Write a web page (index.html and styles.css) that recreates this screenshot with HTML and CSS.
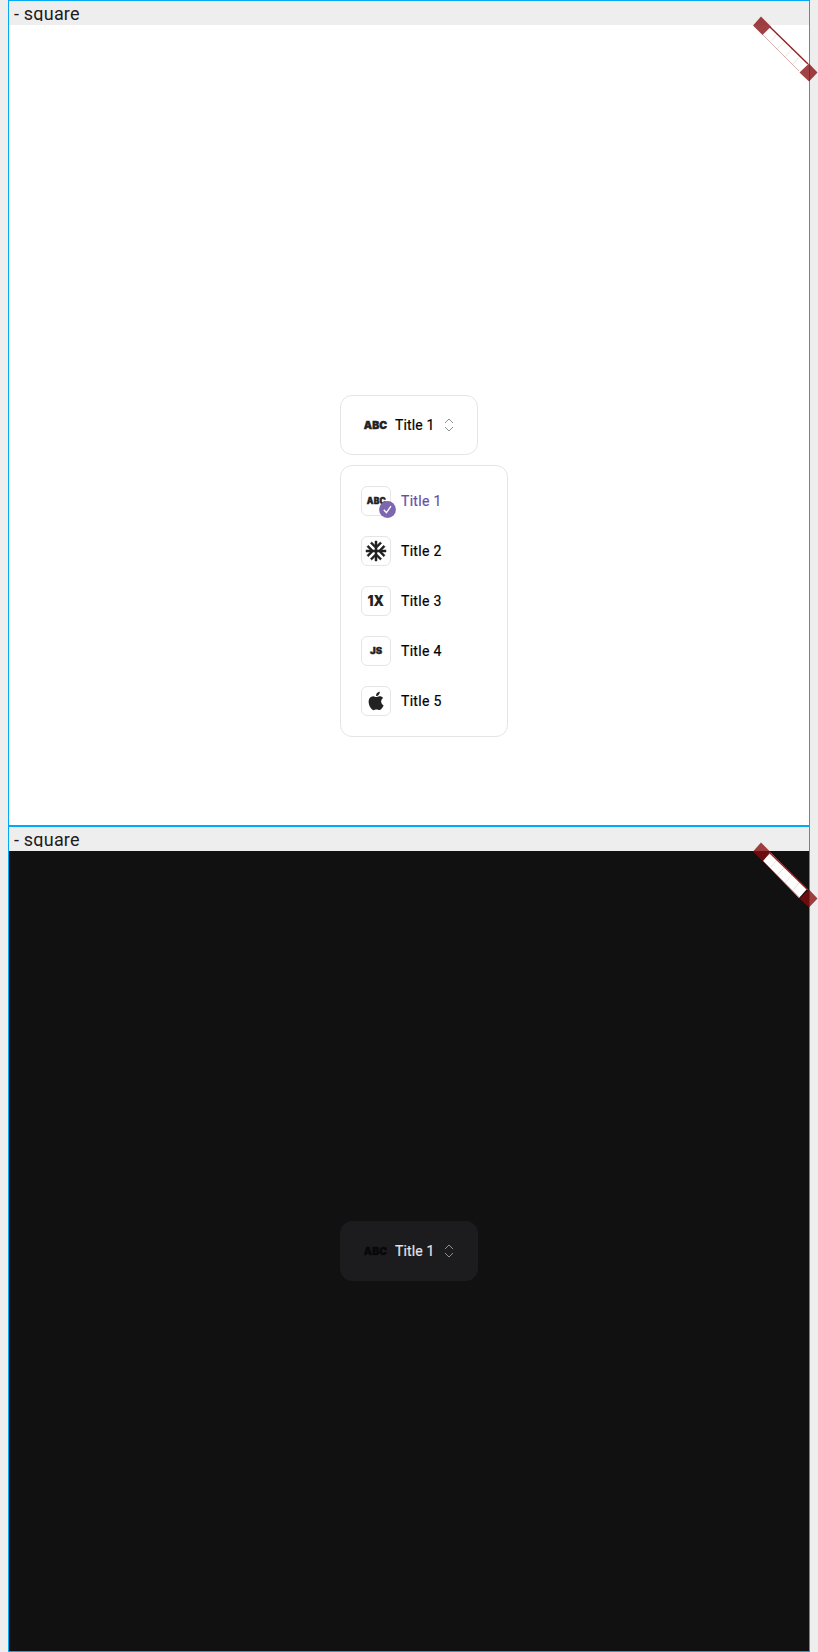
FILE: index.html
```html
<!DOCTYPE html>
<html lang="en">
<head>
<meta charset="utf-8">
<title>square</title>
<link rel="stylesheet" href="styles.css">
</head>
<body>
<main class="gallery">
  <section class="frame light">
    <header class="caption"><span>- square</span></header>
    <div class="stage">
      <div class="dropdown">
        <button class="trigger">
          <svg class="brand" width="24" height="20" viewBox="0 0 24 20"><text class="logo abc" x="0.8" y="14" textLength="23.4" lengthAdjust="spacing">ABC</text></svg>
          <span class="label">Title 1</span>
          <svg class="chevrons" width="10" height="14" viewBox="0 0 10 14"><path d="M1 5 5 1l4 4M1 9l4 4 4-4"/></svg>
        </button>
        <ul class="menu">
          <li class="item selected">
            <span class="tile">
              <svg width="28" height="28" viewBox="0 0 28 28"><text class="logo abc small" x="4.8" y="17" textLength="19" lengthAdjust="spacing">ABC</text></svg>
              <svg class="check" width="17" height="17" viewBox="0 0 17 17"><circle cx="8.5" cy="8.5" r="8.4"/><path d="m4.8 8.8 2.6 2.9 4.6-6.5"/></svg>
            </span>
            <span class="label">Title 1</span>
          </li>
          <li class="item">
            <span class="tile"><svg width="28" height="28" viewBox="0 0 28 28"><path class="snow" transform="translate(2 2)" d="M22 11h-4.17l3.24-3.24-1.41-1.42L15 11h-2V9l4.66-4.66-1.42-1.41L13 6.17V2h-2v4.17L7.76 2.93 6.34 4.34 11 9v2H9L4.34 6.34 2.93 7.76 6.17 11H2v2h4.17l-3.24 3.24 1.41 1.42L9 13h2v2l-4.66 4.66 1.42 1.41L11 17.83V22h2v-4.17l3.24 3.24 1.42-1.41L13 15v-2h2l4.66 4.66 1.41-1.42L17.83 13H22z"/></svg></span>
            <span class="label">Title 2</span>
          </li>
          <li class="item">
            <span class="tile"><svg width="28" height="28" viewBox="0 0 28 28"><text class="logo onex" x="5.6" y="19" textLength="16.4" lengthAdjust="spacingAndGlyphs">1X</text></svg></span>
            <span class="label">Title 3</span>
          </li>
          <li class="item">
            <span class="tile"><svg width="28" height="28" viewBox="0 0 28 28"><text class="logo js" x="8" y="17" textLength="12" lengthAdjust="spacingAndGlyphs">JS</text></svg></span>
            <span class="label">Title 4</span>
          </li>
          <li class="item">
            <span class="tile"><svg width="28" height="28" viewBox="0 0 28 28"><path class="apple" transform="translate(3.1 2.9) scale(.92)" d="M18.71 19.5C17.88 20.74 17 21.95 15.66 21.97 14.32 22 13.89 21.18 12.37 21.18 10.84 21.18 10.37 21.95 9.1 22 7.79 22.05 6.8 20.68 5.96 19.47 4.25 17 2.94 12.45 4.7 9.39 5.57 7.87 7.13 6.91 8.82 6.88 10.1 6.86 11.32 7.75 12.11 7.75 12.89 7.75 14.37 6.68 15.92 6.84 16.57 6.87 18.39 7.1 19.56 8.82 19.47 8.88 17.39 10.1 17.41 12.63 17.44 15.65 20.06 16.66 20.09 16.67 20.06 16.74 19.67 18.11 18.71 19.5ZM13 3.5C13.73 2.67 14.94 2.04 15.94 2 16.07 3.17 15.6 4.35 14.9 5.19 14.21 6.04 13.07 6.7 11.95 6.61 11.8 5.46 12.36 4.26 13 3.5Z"/></svg></span>
            <span class="label">Title 5</span>
          </li>
        </ul>
      </div>
    </div>
    <svg class="ribbon" width="68" height="70" viewBox="0 0 68 70">
      <path class="strip" d="m20 17 37 37-8 9-36-37z"/>
      <path class="edge" d="m20 18 38 37"/>
      <path class="edge faint" d="m13 26 36 36"/>
      <path class="edge seam" d="m27 25-6 7m13 1-7 7m15 0-7 8m15-1-7 8"/>
      <path class="knot" d="m11 7.5 10 10-8.5 8.5-9.5-9.5zM59 54.5l8.5 9L59 72.5l-9.5-9z"/>
    </svg>
  </section>
  <section class="frame dark">
    <header class="caption"><span>- square</span></header>
    <div class="stage">
      <div class="dropdown">
        <button class="trigger">
          <svg class="brand" width="24" height="20" viewBox="0 0 24 20"><text class="logo abc" x="0.8" y="14" textLength="23.4" lengthAdjust="spacing">ABC</text></svg>
          <span class="label">Title 1</span>
          <svg class="chevrons" width="10" height="14" viewBox="0 0 10 14"><path d="M1 5 5 1l4 4M1 9l4 4 4-4"/></svg>
        </button>
      </div>
    </div>
    <svg class="ribbon" width="68" height="70" viewBox="0 0 68 70">
      <path class="strip" d="m20 17 37 37-8 9-36-37z"/>
      <path class="edge" d="m20 18 38 37"/>
      <path class="edge faint" d="m13 26 36 36"/>
      <path class="edge seam" d="m27 25-6 7m13 1-7 7m15 0-7 8m15-1-7 8"/>
      <path class="knot" d="m11 7.5 10 10-8.5 8.5-9.5-9.5zM59 54.5l8.5 9L59 72.5l-9.5-9z"/>
    </svg>
  </section>
</main>
</body>
</html>
```
FILE: styles.css
```css
* { box-sizing: border-box; }
body {
  margin: 0;
  background: #eee;
  font-family: Roboto, sans-serif;
  overflow: hidden;
}
.gallery { padding: 0 8px; }
.frame {
  position: relative;
  height: 826px;
  border: 1px solid #03a9f4;
  display: flex;
  flex-direction: column;
}
.caption {
  height: 24px;
  padding-left: 5px;
  font-size: 18px;
  line-height: 26px;
  letter-spacing: .2px;
  color: #1d1b20;
  background: #eee;
}
.caption span {
  display: block;
  height: 20px;
  overflow: hidden;
}
.stage {
  flex: 1;
  display: flex;
  align-items: center;
  justify-content: center;
  background: #fff;
}
.dark .stage { background: #111; }
.dropdown { position: relative; }
.trigger {
  display: flex;
  align-items: center;
  width: 138px;
  height: 60px;
  padding: 0 0 0 22px;
  border: 1px solid #e5e5e6;
  border-radius: 12px;
  background: #fff;
  color: #000;
  font-family: inherit;
}
.dark .trigger {
  background: #1c1c1e;
  border-color: #1c1c1e;
  color: #e4e4e6;
}
.brand { margin-right: 8px; overflow: visible; }
.label {
  font-size: 14px;
  line-height: 20px;
  font-weight: 400;
  letter-spacing: .3px;
  white-space: nowrap;
  -webkit-text-stroke: .2px currentColor;
}
.trigger .label { width: 48.5px; text-align: left; letter-spacing: .15px; }
.logo {
  font-family: Inter, sans-serif;
  font-weight: 900;
  fill: #222;
  stroke: #222;
  stroke-width: .4px;
}
.dark .logo { fill: #080808; stroke: #080808; }
.abc { font-size: 10.5px; }
.small { font-size: 8.4px; }
.onex { font-size: 14px; stroke-width: 0; }
.js { font-size: 8.4px; }
.chevrons path {
  fill: none;
  stroke: #8e8e93;
  stroke-width: 1;
}
.menu {
  position: absolute;
  top: 70px;
  left: 0;
  width: 168px;
  margin: 0;
  padding: 20px;
  list-style: none;
  display: flex;
  flex-direction: column;
  gap: 20px;
  background: #fff;
  border: 1px solid #e5e5e6;
  border-radius: 12px;
}
.item {
  display: flex;
  align-items: center;
  gap: 10px;
  height: 30px;
  color: #000;
}
.selected .label { color: #6750a4; }
.tile {
  position: relative;
  width: 30px;
  height: 30px;
  border: 1px solid #e5e5e6;
  border-radius: 6px;
}
.tile svg { display: block; }
.tile .check {
  position: absolute;
  left: 17px;
  top: 14px;
}
.check circle { fill: #7e67b1; }
.check path { fill: none; stroke: #fff; stroke-width: 1.3; }
.snow { fill: #222; stroke: #222; stroke-width: .5; }
.apple { fill: #222; }
.ribbon {
  position: absolute;
  left: 741px;
  top: 8px;
  overflow: visible;
  z-index: 2;
}
.strip { fill: #fff; }
.edge { fill: none; stroke: #931f23; stroke-width: 1.4; }
.faint { opacity: .35; stroke-width: 1; }
.seam { opacity: .12; stroke-width: 1; }
.knot { fill: #850d10; fill-opacity: .78; }
```
